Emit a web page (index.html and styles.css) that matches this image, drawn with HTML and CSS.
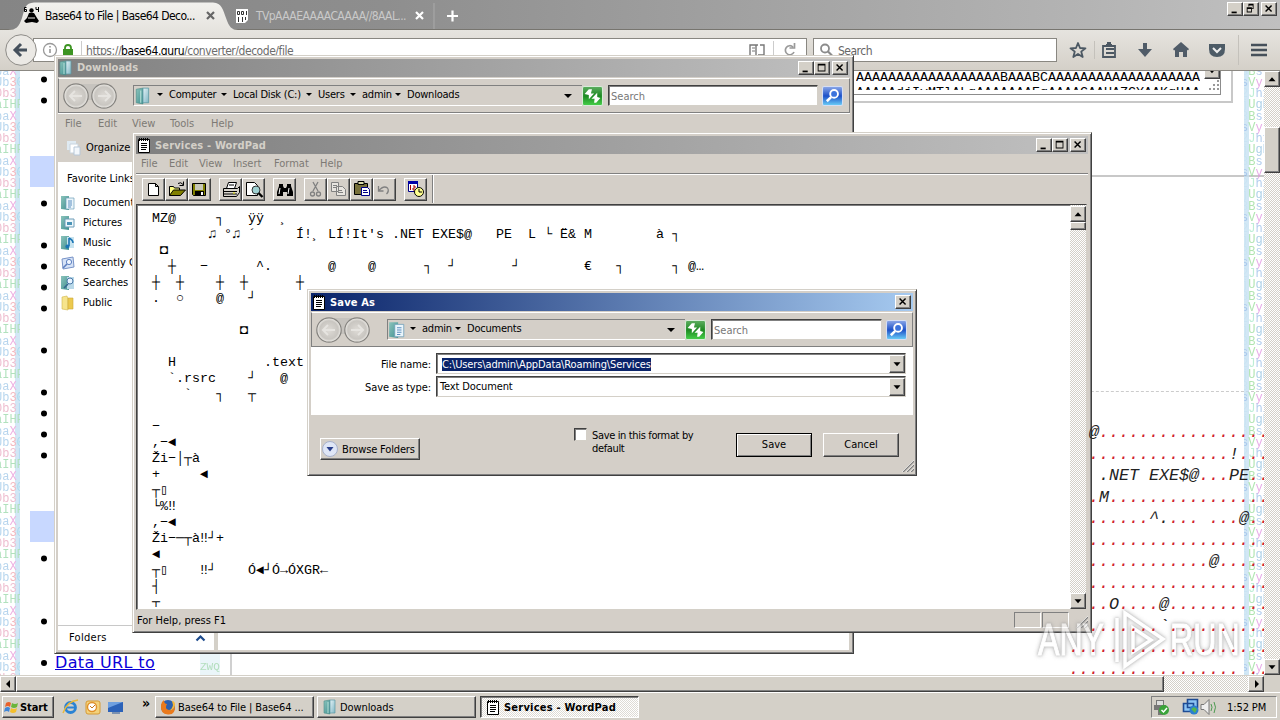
FILE: index.html
```html
<!DOCTYPE html>
<html lang="en">
<head>
<meta charset="utf-8">
<title>Desktop</title>
<link rel="stylesheet" href="styles.css">
</head>
<body>
<svg class="defs" width="0" height="0">
  <defs>
    <linearGradient id="gTeal" x1="0" y1="0" x2="1" y2="1"><stop offset="0" stop-color="#8cc4bc"/><stop offset="1" stop-color="#3f8f90"/></linearGradient>
    <linearGradient id="gPage" x1="0" y1="0" x2="1" y2="1"><stop offset="0" stop-color="#e4f2f6"/><stop offset="1" stop-color="#7fb6c4"/></linearGradient>
    <linearGradient id="gGreen" x1="0" y1="0" x2="0" y2="1"><stop offset="0" stop-color="#5fae62"/><stop offset=".5" stop-color="#1d8a22"/><stop offset="1" stop-color="#46d04a"/></linearGradient>
    <linearGradient id="gBlue" x1="0" y1="0" x2="0" y2="1"><stop offset="0" stop-color="#8ca8e8"/><stop offset=".5" stop-color="#1c50c8"/><stop offset="1" stop-color="#6cd0f8"/></linearGradient>
    <radialGradient id="gBall"><stop offset="0" stop-color="#dedbd6"/><stop offset=".75" stop-color="#c9c6c1"/><stop offset="1" stop-color="#f0eeea"/></radialGradient>
    <linearGradient id="gTab" x1="0" y1="0" x2="0" y2="1"><stop offset="0" stop-color="#f2f1ee"/><stop offset="1" stop-color="#e6e4df"/></linearGradient>
  </defs>
  <symbol id="folder" viewBox="0 0 16 16"><path d="M2 2l6-1v14l-6-1z" fill="url(#gTeal)" stroke="#4d8f8c" stroke-width=".6"/><path d="M8 1h5v13H8z" fill="url(#gPage)" stroke="#5b9aa4" stroke-width=".7"/><path d="M6 3v11" stroke="#b7e0d8"/></symbol>
  <symbol id="docs" viewBox="0 0 16 16"><path d="M1 1h8v14l-8-1z" fill="url(#gTeal)"/><path d="M6 3h8v11H6z" fill="#eaf5fb" stroke="#6e9db8" stroke-width=".7"/><path d="M8 6h4M8 8h4M8 10h4M8 12h3" stroke="#5c8ec0"/></symbol>
  <symbol id="pics" viewBox="0 0 16 16"><path d="M1 1h8v14l-8-1z" fill="url(#gTeal)"/><path d="M5 4h9v8H5z" fill="#eef7fb" stroke="#6e9db8"/><path d="M7 7h5v3H7z" fill="#4a93b6"/></symbol>
  <symbol id="music" viewBox="0 0 16 16"><path d="M1 1h8v14l-8-1z" fill="url(#gTeal)"/><path d="M7 2h7v11H7z" fill="#c7e3ef"/><path d="M9 3v8M9 3q4 2 4 5" stroke="#1b75b5" stroke-width="1.6" fill="none"/><circle cx="7.4" cy="11.5" r="2" fill="#1b75b5"/></symbol>
  <symbol id="recent" viewBox="0 0 16 16"><path d="M2 4l11-2 1 10-11 2z" fill="#d5e2f6" stroke="#7893c7"/><circle cx="9" cy="7" r="2.6" fill="#eef5ff" stroke="#5d7fc0"/><path d="M7 9l-4 4" stroke="#5d7fc0" stroke-width="1.6"/></symbol>
  <symbol id="find" viewBox="0 0 16 16"><path d="M1 1h8v14l-8-1z" fill="url(#gTeal)"/><path d="M7 2h7v12H7z" fill="#b9d8e8"/><circle cx="10" cy="6" r="3" fill="#e6f3ff" stroke="#4c79a8"/><path d="M8 9l-4 4" stroke="#34658f" stroke-width="1.6"/></symbol>
  <symbol id="public" viewBox="0 0 16 16"><path d="M2 2l5-1 1 3v11l-6-1z" fill="#f6e48c" stroke="#d2b64a" stroke-width=".6"/><path d="M8 3h5v11H8z" fill="#ecc94e" stroke="#cfa83a" stroke-width=".6"/></symbol>
  <symbol id="pad" viewBox="0 0 16 16"><path d="M2.500 2.500h11v13h-11z" fill="#fff" stroke="#000"/><path d="M3.500 1v3M5.500 1v3M7.500 1v3M9.500 1v3M11.500 1v3" stroke="#000"/><path d="M5 6.500h6M5 8.500h6M5 10.500h6M5 12.500h5" stroke="#000"/></symbol>
  <symbol id="go" viewBox="0 0 20 19"><rect x=".5" y=".5" width="19" height="18" rx="1.5" fill="url(#gGreen)" stroke="#d8ecd8"/><path d="M2.500 7.500l4-4.500h3l-1 4h3l-5 5.500v-4zM17.500 11.500l-4 4.500h-2l.5-4h-3l5.500-5.500v4z" fill="#fff"/></symbol>
  <symbol id="seek" viewBox="0 0 20 19"><rect x=".5" y=".5" width="19" height="18" rx="1.500" fill="url(#gBlue)" stroke="#d5def3"/><circle cx="11.500" cy="7.500" r="3.700" fill="#3b73dc" stroke="#fff" stroke-width="1.800"/><path d="M8.600 10.500l-4 4" stroke="#fff" stroke-width="2.400"/></symbol>
  <symbol id="balls" viewBox="0 0 56 28"><rect x="14" y="2" width="28" height="16" fill="#c6c3be"/><circle cx="14" cy="14" r="12.200" fill="url(#gBall)" stroke="#85837f" stroke-width="1.200"/><circle cx="42" cy="14" r="12.200" fill="url(#gBall)" stroke="#85837f" stroke-width="1.200"/><path d="M8 14h12M13 9l-5 5 5 5M36 14h12M43 9l5 5-5 5" stroke="#e6e4e0" stroke-width="2" fill="none"/></symbol>
  <symbol id="grip" viewBox="0 0 12 12"><path d="M1 12L12 1M5 12l7-7M9 12l3-3" stroke="#808080" stroke-width="1.400"/><path d="M0 12L12 0M4 12l8-8M8 12l4-4" stroke="#fff" stroke-width=".6"/></symbol>
  <symbol id="wmin" viewBox="0 0 16 14"><path d="M4 10h6v2H4z"/></symbol>
  <symbol id="wmax" viewBox="0 0 16 14"><path d="M3 2h9v9H3zM4 4v6h7V4z" fill-rule="evenodd"/></symbol>
  <symbol id="wres" viewBox="0 0 16 14"><path d="M5 1h6v6H9V6h1V3H6v1H5zM3 5h6v6H3zM4 7v3h4V7z" fill-rule="evenodd"/></symbol>
  <symbol id="wcls" viewBox="0 0 16 14"><path d="M4 3l7 7M11 3l-7 7" stroke="#000" stroke-width="1.700"/></symbol>
  <symbol id="dn" viewBox="0 0 16 16"><path d="M4 6h8l-4 4.500z"/></symbol>
  <symbol id="up" viewBox="0 0 16 16"><path d="M4 10.500h8L8 6z"/></symbol>
</svg>

<div class="desktop">
  <div class="browser">
    <div class="tabs">
      <svg class="tabshape" width="230" height="30"><path d="M0 30C8 30 11 27 14 18C17 8 17 3 26 2.500H205C214 3 215 10 218 18C221 27 224 30 230 30z" fill="url(#gTab)"/></svg>
      <div class="tab t1">
        <svg width="18" height="17" viewBox="0 0 18 17"><circle cx="8.500" cy="3.500" r="2.200"/><path d="M6 6h5l3 5 2 3-2 2-5-1-6 1-2-2 3-3z"/><path d="M3.500 .5h-2v4h2v-2h-2M13 0v2.500h3M15.500 0v5" stroke="#000" fill="none"/><path d="M5 11h7" stroke="#e8e6e1"/></svg>
        <span class="cap">Base64 to File | Base64 Deco...</span>
        <svg class="x" width="9" height="9"><path d="M1 1l7 7M8 1L1 8" stroke="#666" stroke-width="2.200"/></svg>
      </div>
      <div class="tab t2">
        <svg width="14" height="16" viewBox="0 0 14 16"><path d="M1 1h12v11l-3 3H1z" fill="#fff"/><path d="M2.500 3.500h2v3h-2zM6.500 3.500h2v3h-2zM11.500 3v4M3.500 9v5M7.500 9v5M10.500 9v3" fill="none" stroke="#333"/></svg>
        <span class="cap">TVpAAAEAAAACAAAA//8AAL...</span>
        <svg class="x" width="9" height="9"><path d="M1 1l7 7M8 1L1 8" stroke="#fff" stroke-width="2.200"/></svg>
      </div>
      <svg class="plus" width="26" height="26"><path d="M1 0v26" stroke="#aaa"/><path d="M14 13h11M19.500 7.500v11" stroke="#fff" stroke-width="2.200"/></svg>
      <div class="wbtns"><svg class="wb"><use href="#wmin"/></svg><svg class="wb"><use href="#wres"/></svg><svg class="wb last"><use href="#wcls"/></svg></div>
    </div>
    <div class="nav">
      <svg class="back" width="34" height="34"><circle cx="17" cy="17" r="15.300" fill="#ebe9e5" stroke="#8e8c88"/><path d="M11 17h12M17 11l-6 6 6 6" stroke="#45505c" stroke-width="3" fill="none"/></svg>
      <div class="url">
        <svg width="46" height="22"><circle cx="10" cy="11" r="6.500" fill="#fff" stroke="#999" stroke-width="1.300"/><path d="M10 10v4M10 7v1.500" stroke="#888" stroke-width="1.400"/><path d="M23 10h10v7H23z" fill="#3d9423"/><path d="M25 11V9q0-3 3-3t3 3v2" fill="none" stroke="#3d9423" stroke-width="1.800"/><path d="M41.500 2v18" stroke="#ccc"/></svg>
        <span class="addr">https://<b>base64.guru</b>/converter/decode/file</span>
        <svg width="58" height="22"><path d="M2 6h6v11H2zM8 6h2M12 6h4v10h-6" fill="none" stroke="#777" stroke-width="1.400"/><path d="M4 9h3M4 12h3" stroke="#777"/><path d="M25.500 2v18" stroke="#ccc"/><path d="M46 13a4.500 4.500 0 1 1-1-5M46.500 4v5h-5" fill="none" stroke="#999" stroke-width="1.700"/></svg>
      </div>
      <div class="sfield"><svg width="22" height="22"><circle cx="11" cy="9.500" r="4" fill="none" stroke="#8b8b8b" stroke-width="1.800"/><path d="M14 12.500l4 4" stroke="#8b8b8b" stroke-width="2.200"/></svg><span>Search</span></div>
      <svg class="tools" width="212" height="30" viewBox="0 0 212 30">
        <g fill="none" stroke="#4c5863" stroke-width="1.800"><path d="M10 8l2 5 5.500.3-4.300 3.300 1.500 5.400L10 19l-4.700 3 1.500-5.400L2.500 13.300 8 13z" stroke-linejoin="round"/><path d="M35 11h12v11H35zM38 10h6M39 8h4M38 14h8M38 18h8"/></g>
        <path d="M26.500 6v18M170.500 0v30" stroke="#c4c1bb"/>
        <path d="M75 8h4v6h5l-7 8-7-8h5zM105 14l8-7 8 7-1 1.500-1-.7V22h-4v-5h-4v5h-4v-7l-1 .5z" fill="#505c68"/>
        <path d="M141 9h16v5q0 8-8 8t-8-8z" fill="#4d5b66"/><path d="M145 13l4 4 4-4" fill="none" stroke="#eee" stroke-width="2"/>
        <path d="M183 10h16M183 15h16M183 20h16" stroke="#46505a" stroke-width="2.600"/>
      </svg>
    </div>
    <div class="view">
      <div class="page">
        <svg class="strip" width="20" height="606">
          <defs><pattern id="pl" width="20" height="45" patternUnits="userSpaceOnUse"><rect x="15" width="5" height="45" fill="#c4e0f2"/><g class="mx"><text x="-5" y="15"><tspan fill="#9fc8e8">Ub</tspan><tspan fill="#f0a0a8">3</tspan><tspan fill="#8fd0e8">0</tspan></text><text x="-5" y="26"><tspan fill="#e8a8c0">0b3</tspan><tspan fill="#9fd0ee">[</tspan></text><text x="-5" y="37" fill="#98d8a8">aIHF</text><text x="-5" y="4"><tspan fill="#a0c8e8">ba</tspan><tspan fill="#e898d8">X</tspan></text><text x="-5" y="49"><tspan fill="#a0c8e8">ba</tspan><tspan fill="#e898d8">X</tspan></text></g></pattern></defs>
          <rect width="20" height="606" fill="url(#pl)"/>
        </svg>
        <div class="side">
          <svg class="dots" width="180" height="581"><path d="M10 85h30v31H10zM10 440h30v31H10z" fill="#c8d8ff"/><path d="M24 8.500h0M24 29.500h0M24 132.500h0M24 174.500h0M24 195.500h0M24 216.500h0M24 237.500h0M24 279.500h0M24 321.500h0M24 342.500h0M24 363.500h0M24 384.500h0M24 487.500h0M24 550.500h0" stroke="#000" stroke-width="6" stroke-linecap="round"/></svg>
          <div class="li"><i></i><a>Data URL to</a></div>
        </div>
        <svg class="strip mid" width="20" height="606"><rect width="20" height="606" fill="#e4f2f8"/><g class="mx"><text x="0" y="599" font-size="11" fill="#9ad4a8">ZWQ</text></g></svg>
        <div class="main">
          <div class="fset"><div class="tarea"><pre>AAAAAAAAAAAAAAAAAABAAABCAAAAAAAAAAAAAAAAAAA
AAAAAdjIyMTlALgAAAAAAAEgAAAACAAUAZCYAAKgHAA</pre><div class="tside"><svg class="sb"><use href="#dn"/></svg><svg width="12" height="12"><path d="M10 2h0M6 6h0M10 6h0M2 10h0M6 10h0M10 10h0" stroke="#999" stroke-width="2" stroke-linecap="square"/></svg></div></div></div>
          <div class="rule"></div>
          <div class="out"><pre><b>@</b>.................
  ..............<b>!</b>...
   <b>.NET EXE$@</b>...<b>PE</b>..
  .<b>M</b>................
  ......<b>^.</b>... ...<b>@</b>..
  ..................
  ............<b>@</b>.....
  ..................
  ..<b>O</b>....<b>@</b>..........
  .......<b>`</b>..........
....................
................. ..</pre></div>
        </div>
        <svg class="strip right" width="20" height="606">
          <defs><pattern id="pr" width="20" height="45" patternUnits="userSpaceOnUse"><rect width="5" height="45" fill="#c4e0f2"/><g class="mx"><text x="-3" y="15"><tspan fill="#8fb8e8">s</tspan><tspan fill="#98dc98">V</tspan><tspan fill="#e090e0">y</tspan></text><text x="-3" y="26"><tspan fill="#b8dcf0">2</tspan><tspan fill="#a8e8c8">J</tspan><tspan fill="#98bce8">h</tspan><tspan fill="#98bce8">1</tspan></text><text x="-3" y="37"><tspan fill="#b8dcf0">j</tspan><tspan fill="#98dc98">U</tspan><tspan fill="#90c0e0">gb</tspan></text><text x="-3" y="4"><tspan fill="#b8dcf0">3</tspan><tspan fill="#98dc98">B</tspan><tspan fill="#98bce8">s</tspan></text><text x="-3" y="49"><tspan fill="#b8dcf0">3</tspan><tspan fill="#98dc98">B</tspan><tspan fill="#98bce8">s</tspan></text></g></pattern></defs>
          <rect width="20" height="606" fill="url(#pr)"/>
        </svg>
      </div>
      <div class="vs"><svg class="sb"><use href="#up"/></svg><div class="thumb"></div><svg class="sb end"><use href="#dn"/></svg></div>
    </div>
    <div class="hs"><svg class="sb"><path d="M9 3v8L5 7z"/></svg><div class="thumb"></div><svg class="sb end"><path d="M6 3v8l4-4z"/></svg><div class="corner"></div></div>
  </div>

  <div class="taskbar">
    <div class="btn start"><svg width="16" height="16"><path d="M2 4q3-2 5 0L6 8Q4 6 1 8z" fill="#e8622c"/><path d="M8 4q3 2 6 0l-1 4q-3 2-6 0z" fill="#69b53b"/><path d="M1 9q3-2 5 0l-1 4q-2-2-5 0z" fill="#3f86d8"/><path d="M7 9q3 2 6 0l-1 4q-3 2-6 0z" fill="#f4bf2c"/></svg><b>Start</b></div>
    <svg class="quick" width="66" height="18"><circle cx="8.500" cy="9.500" r="5" fill="none" stroke="#2b83d4" stroke-width="2.800"/><path d="M4 9.500h9" stroke="#2b83d4" stroke-width="2"/><path d="M1 15Q5 3 16 2" fill="none" stroke="#e9b83a" stroke-width="1.400"/><rect x="24" y="3" width="14" height="13" rx="2" fill="#f3d27c" stroke="#d79a35"/><circle cx="30" cy="9" r="4.500" fill="#fff" stroke="#e0902c" stroke-width="1.400"/><path d="M28 8l2 2 3-3" stroke="#c87818" fill="none"/><path d="M46 4h15v10H46z" fill="#2c62b8"/><path d="M46 4h15l-15 6z" fill="#6fa0e0"/><path d="M50 15h8" stroke="#7b91b0" stroke-width="2"/></svg>
    <span class="more">»</span>
    <div class="btn task"><svg width="16" height="16"><circle cx="8" cy="8" r="7" fill="#2b60b0"/><path d="M1 6Q0 15 8 15.500T15 6Q14 12 9 11T7 5Q4 5 4 1 1 3 1 6z" fill="#ea7a1c"/><path d="M15 6Q15 2 12 2l1 4q-1 5-4 5 5 1 6-5z" fill="#f7b93a"/></svg><span class="s1">Base64 to File | Base64 ...</span></div>
    <div class="btn task"><svg width="16" height="16"><use href="#folder"/></svg><span class="s2">Downloads</span></div>
    <div class="btn task on"><svg width="16" height="16"><use href="#pad"/></svg><b class="s3">Services - WordPad</b></div>
    <div class="tray"><svg width="68" height="20"><path d="M4 3h8v5h2v5h-3v5H6v-5H2V8h2z" fill="#777"/><path d="M5 4h6v4H5z" fill="#ddd"/><circle cx="12" cy="13" r="5" fill="#3aa33a"/><path d="M9.500 13l2 2 3.500-4" stroke="#fff" stroke-width="1.500" fill="none"/><path d="M35.500 2.500h10v8h-10zM31.500 6.500h10v8h-10z" fill="#8cc4f4" stroke="#1f4c94" stroke-width="1.600"/><circle cx="42" cy="13" r="4.500" fill="#2b7fd0"/><path d="M39 12l3-2 3 2-2 4z" fill="#55b550"/><path d="M49 7.500h3l5-5v15l-5-5h-3z" fill="#eee" stroke="#777"/><path d="M59 7q2 3 0 7M62 5q3 5 0 11" fill="none" stroke="#4c9a50"/></svg><span>1:52 PM</span></div>
  </div>

  <div class="win explorer">
    <div class="title"><svg width="16" height="16"><use href="#folder"/></svg><b class="n1">Downloads</b><div class="wbtns"><svg class="wb"><use href="#wmin"/></svg><svg class="wb"><use href="#wmax"/></svg><svg class="wb last"><use href="#wcls"/></svg></div></div>
    <div class="band">
      <svg width="56" height="28"><use href="#balls"/></svg>
      <div class="crumbs"><svg width="18" height="18"><use href="#folder"/></svg><div class="path p1"><span>Computer</span><span>Local Disk (C:)</span><span>Users</span><span>admin</span><span>Downloads</span></div><svg class="drop" width="10" height="6"><path d="M1 1h8L5 5z"/></svg></div>
      <svg class="go" width="21" height="20"><use href="#go"/></svg>
      <div class="field"><span>Search</span></div>
      <svg class="go" width="21" height="20"><use href="#seek"/></svg>
    </div>
    <div class="menu m1"><span>File</span><span>Edit</span><span>View</span><span>Tools</span><span>Help</span></div>
    <div class="org"><svg width="16" height="16"><path d="M1 1h9v9H1z" fill="#dfeaf2"/><path d="M4 4h8v9H4z" fill="#fff" stroke="#c8d4de"/><path d="M8 7h6v8H8z" fill="#f3f7fb" stroke="#b8c8d8"/></svg><span>Organize</span></div>
    <div class="body">
      <div class="links">
        <div class="fav">Favorite Links</div>
        <div class="lk"><svg width="16" height="16"><use href="#docs"/></svg><span>Documents</span></div>
        <div class="lk"><svg width="16" height="16"><use href="#pics"/></svg><span>Pictures</span></div>
        <div class="lk"><svg width="16" height="16"><use href="#music"/></svg><span>Music</span></div>
        <div class="lk"><svg width="16" height="16"><use href="#recent"/></svg><span>Recently Changed</span></div>
        <div class="lk"><svg width="16" height="16"><use href="#find"/></svg><span>Searches</span></div>
        <div class="lk"><svg width="16" height="16"><use href="#public"/></svg><span>Public</span></div>
        <div class="fold"><span>Folders</span><svg width="11" height="8"><path d="M1.500 6.500l4-4 4 4" fill="none" stroke="#1c4a8c" stroke-width="2.200"/></svg></div>
      </div>
    </div>
  </div>

  <div class="win wordpad">
    <div class="title"><svg width="16" height="16"><use href="#pad"/></svg><b class="n2">Services - WordPad</b><div class="wbtns"><svg class="wb"><use href="#wmin"/></svg><svg class="wb"><use href="#wmax"/></svg><svg class="wb last"><use href="#wcls"/></svg></div></div>
    <div class="menu m2"><span>File</span><span>Edit</span><span>View</span><span>Insert</span><span>Format</span><span>Help</span></div>
    <div class="tbar">
      <svg class="tb"><path d="M5.500 4.500h7l3 3v9h-10zM12.500 4.500v3h3" fill="#fff" stroke="#000"/></svg>
      <svg class="tb"><path d="M3.500 16.500v-9h4l1 1.500h5v3" fill="#ffff80" stroke="#000"/><path d="M3.500 16.500l4-5.500h12l-5 5.500z" fill="#808000" stroke="#000"/><path d="M12 4.500q3-2 5 1M17.500 2.500v4h-4" fill="none" stroke="#000"/></svg>
      <svg class="tb"><path d="M3.500 4.500h13v12h-12l-1-1z" fill="#808000" stroke="#000"/><path d="M6 5h8v6H6z" fill="#c8c8b8"/><path d="M6 12h9v4H6z" fill="#000"/><path d="M12 13h2v3h-2z" fill="#fff"/></svg>
      <svg class="tb g8"><path d="M8.500 3.500h8l-2 6h-8z" fill="#fff" stroke="#000"/><path d="M3.500 9.500h14l2-2v6l-3 4h-13z" fill="#d8d4cc" stroke="#000"/><path d="M4 12.500h13M4 15h13M9 6h5" stroke="#000"/><path d="M13 14h2" stroke="#ee0"/></svg>
      <svg class="tb"><path d="M3.500 3.500h8l3 3v10h-11z" fill="#fff" stroke="#000"/><circle cx="13" cy="11" r="4" fill="#9fd0d0" stroke="#333"/><path d="M15.500 14l4 4" stroke="#000" stroke-width="2.400"/></svg>
      <svg class="tb g8"><path d="M5 5h4v2l1 2h2l1-2V5h4v2l2 6v4h-6v-4h-4v4H3v-4l2-6z"/><path d="M6 9l-1 6M15 9l-1 6" stroke="#fff"/></svg>
      <svg class="tb g8"><g stroke="#808080" fill="none" stroke-width="1.300"><path d="M8 3l5 9M13 3l-5 9"/><circle cx="7.500" cy="15" r="2"/><circle cx="13.500" cy="15" r="2"/></g></svg>
      <svg class="tb"><path d="M3.500 3.500h7v9h-7zM8.500 7.500h6l3 3v6h-9z" fill="#e8e5e0" stroke="#808080"/><path d="M5 6.500h4M5 8.500h3M10 11.500h4M10 13.500h5" stroke="#808080"/></svg>
      <svg class="tb"><path d="M3.500 4.500h13v11h-13z" fill="#77703a" stroke="#000"/><path d="M7 2.500h6v3H7z" fill="#dda" stroke="#000"/><path d="M10.500 8.500h6l2 2v6h-8z" fill="#fff" stroke="#008"/><path d="M12 11.500h4M12 13.500h5" stroke="#008"/></svg>
      <svg class="tb"><path d="M4.500 7v5h5M4.500 12q5-6 9-3 2 3-1 6" fill="none" stroke="#808080" stroke-width="1.300"/></svg>
      <svg class="tb g8"><path d="M3.500 2.500h9v10h-9z" fill="#fff" stroke="#008"/><path d="M3 2h10v3H3z" fill="#0000a8"/><path d="M5.500 6v5M8 7h2v2H8v2h2" stroke="#a00" fill="none"/><circle cx="14" cy="13" r="4.500" fill="#ffff90" stroke="#000"/><path d="M14 10v3h3" stroke="#000" fill="none"/></svg>
      <i class="tend"></i>
    </div>
    <div class="edit">
<pre>MZ@     ┐   ÿÿ  ¸
       ♫ °♫ ´     Í!¸ LÍ!It's .NET EXE$@   PE  L └ Ë& M        à ┐
 ◘
  ┼   −      ^.       @    @      ┐  ┘       ┘        €   ┐      ┐ @…
┼  ┼    ┼  ┼      ┼
.  ○    @   ┘

           ◘

  H           .text
  `.rsrc    ┘   @
    `   ┐   ┬

−
,−◄
Ži−│┬à
+     ◄
┬▯
└%‼
,−◄
Ži−─┬à‼┘+
◄
┬▯    ‼┘    Ó◄┘Ó→ÓXGR←
┤
┬</pre>
      <div class="vs"><svg class="sb"><use href="#up"/></svg><div class="thumb"></div><svg class="sb end"><use href="#dn"/></svg></div>
    </div>
    <div class="status"><span>For Help, press F1</span><i></i><i></i><svg width="12" height="12"><use href="#grip"/></svg></div>
  </div>

  <div class="win dialog">
    <div class="title active"><svg width="16" height="16"><use href="#pad"/></svg><b class="n3">Save As</b><div class="wbtns"><svg class="wb last"><use href="#wcls"/></svg></div></div>
    <div class="band">
      <svg width="56" height="28"><use href="#balls"/></svg>
      <div class="crumbs"><svg width="18" height="18"><use href="#docs"/></svg><div class="path p2"><span>admin</span><span>Documents</span></div><svg class="drop" width="10" height="6"><path d="M1 1h8L5 5z"/></svg></div>
      <svg class="go" width="21" height="20"><use href="#go"/></svg>
      <div class="field"><span>Search</span></div>
      <svg class="go" width="21" height="20"><use href="#seek"/></svg>
    </div>
    <div class="form">
      <label class="l1">File name:</label><div class="combo"><em>C:\Users\admin\AppData\Roaming\Services</em><svg class="sb"><use href="#dn"/></svg></div>
      <label class="l2">Save as type:</label><div class="combo"><span>Text Document</span><svg class="sb"><use href="#dn"/></svg></div>
    </div>
    <div class="foot">
      <div class="pb browse"><svg width="18" height="18"><circle cx="9" cy="9" r="7.500" fill="#dfe6f6" stroke="#a8b2cc"/><path d="M5.500 7h7L9 11.500z" fill="#2a3f8c"/></svg><span>Browse Folders</span></div>
      <i class="chk"></i>
      <div class="chkl"><span>Save in this format by</span><br><span>default</span></div>
      <div class="pb save"><span>Save</span></div>
      <div class="pb cancel"><span>Cancel</span></div>
      <svg class="dgrip" width="12" height="12"><use href="#grip"/></svg>
    </div>
  </div>

  <div class="mark"><span>ANY</span><svg width="58" height="64"><path d="M8 10v44M16 5l38 26-38 27zM24 20v24l18-12z" fill="none" stroke="#fff" stroke-width="3.500"/></svg><span>RUN</span></div>
</div>
</body>
</html>
```
FILE: styles.css
```css
* { box-sizing: border-box; }
body { margin: 0; font: 11px/14px "DejaVu Sans Condensed", "DejaVu Sans", sans-serif; font-stretch: condensed; color: #000; overflow: hidden; }
svg { display: block; flex: none; }
pre { margin: 0; font-family: "Liberation Mono", "DejaVu Sans Mono", monospace; }
i, em { font-style: normal; }
span, label, b, em { white-space: nowrap; }
.defs { position: absolute; }
.desktop { position: relative; width: 1280px; height: 720px; overflow: hidden; background: #d4cfc8; display: flex; flex-direction: column; }

/* shared pieces */
.wbtns { display: flex; margin-left: auto; }
.wb { width: 16px; height: 14px; background: #d4d0c8; border: 1px solid; border-color: #fff #404040 #404040 #fff; box-shadow: inset -1px -1px #808080; }
.wb.last { margin-left: 2px; }
.sb { width: 16px; height: 16px; background: #d4d0c8; border: 1px solid; border-color: #fff #404040 #404040 #fff; box-shadow: inset -1px -1px #808080; }
.vs, .hs { background: repeating-conic-gradient(#fff 0 25%, #d4d0c8 0 50%) 0 0 / 2px 2px; }
.vs { width: 16px; display: flex; flex-direction: column; flex: none; }
.end { margin-top: auto; }
.thumb { background: #d4d0c8; border: 1px solid; border-color: #fff #404040 #404040 #fff; box-shadow: inset -1px -1px #808080; }

/* browser */
.browser { display: flex; flex-direction: column; height: 692px; flex: none; }
.tabs { height: 30px; flex: none; display: flex; position: relative; background: linear-gradient(90deg, #858585, #8e8e8e 30%, #b4b4b4 85%, #c0c0c0); border-bottom: 1px solid #77756f; }
.tabshape { position: absolute; left: 8px; top: 0; }
.tab { display: flex; align-items: center; position: relative; height: 31px; font-size: 12px; }
.t1 { margin-left: 23px; width: 211px; }
.t1 .cap { margin-left: 4px; width: 161px; letter-spacing: -.56px; }
.t2 { color: #c9c9c9; width: 199px; }
.t2 svg:first-child { margin-left: 1px; }
.t2 .cap { margin-left: 7px; width: 159px; letter-spacing: -.58px; }
.plus { margin: 3px 0 0 0; }
.tabs .wbtns { margin: 2px 3px 0 auto; }
.nav { height: 41px; flex: none; display: flex; background: linear-gradient(#e6e4df, #d4d0c8); border-bottom: 1px solid #8b8882; }
.back { margin: 3px 0 0 4px; position: relative; z-index: 1; }
.url { margin: 8px 0 0 -5px; width: 774px; height: 24px; background: #fff; border: 1px solid #898781; display: flex; padding-left: 6px; }
.addr { color: #6c6c6c; font-size: 12px; line-height: 24px; width: 674px; letter-spacing: -.45px; }
.addr b { color: #000; font-weight: normal; }
.sfield { margin: 8px 0 0 6px; width: 244px; height: 24px; background: #fff; border: 1px solid #898781; display: flex; color: #666; font-size: 12px; line-height: 24px; }
.sfield span { margin-left: 2px; letter-spacing: -.5px; }
.tools { margin: 5px 0 0 11px; }
.view { display: flex; height: 604px; flex: none; }
.page { width: 1264px; height: 604px; background: #fff; display: flex; overflow: hidden; }
.mx { font: 12px "Liberation Mono", monospace; }
.strip { opacity: .75; }
.side { width: 180px; }
.li { display: flex; align-items: center; height: 22px; }
.li i { width: 6px; height: 6px; border-radius: 3px; background: #000; margin: 0 8px 0 21px; }
.li a { color: #0a00d8; text-decoration: underline; font: 16px/22px "DejaVu Sans", sans-serif; letter-spacing: .35px; white-space: nowrap; }
.main { width: 1024px; padding-left: 10px; }
.fset { width: 1003px; height: 32px; border: 2px solid #c8c8c8; border-top: 0; border-left: 0; }
.tarea { width: 991px; height: 24px; border: 1px solid #8c8c8c; border-top: 0; display: flex; overflow: hidden; justify-content: flex-end; }
.tarea pre { font-size: 13.33px; line-height: 15px; height: 20px; overflow: hidden; margin-top: -1px; padding: 0; margin-right: 3px; }
.tside { width: 17px; display: flex; flex-direction: column; align-items: flex-end; }
.tside .sb { margin-top: -8px; height: 16px; }
.rule { margin-top: 72px; height: 2px; background: #c8c8c8; width: 1034px; }
.out { margin-top: 214px; border-top: 1px dashed #ccc; border-left: 2px solid #d0d0d0; height: 285px; padding: 30px 0 0 837px; width: 1034px; }
.out pre { font-size: 16.67px; line-height: 21.5px; font-style: italic; color: #d02030; position: relative; z-index: 1; text-indent: 20px; }
.out pre b { font-weight: normal; color: #222; }
.hs { height: 17px; flex: none; display: flex; border-top: 1px solid #d4d0c8; }
.hs .thumb { width: 1148px; }
.hs .end { margin: 0 0 0 auto; }
.corner { width: 16px; background: #d4d0c8; }

/* taskbar */
.taskbar { height: 28px; flex: none; border-top: 1px solid #fff; background: #d4d0c8; display: flex; padding: 3px 3px 0 2px; }
.btn { height: 22px; display: flex; align-items: center; border: 1px solid; border-color: #fff #404040 #404040 #fff; box-shadow: inset -1px -1px #808080; }
.start { width: 52px; padding-left: 1px; }
.start b { font-size: 11px; letter-spacing: -.1px; padding-top: 1px; }
.quick { margin: 2px 0 0 8px; }
.more { margin: 0 5px 0 14px; font-size: 14px; line-height: 14px; font-weight: bold; width: 8px; }
.task { width: 159px; padding-left: 4px; margin-right: 3px; }
.task span, .task b { margin-left: 2px; padding-top: 1px; letter-spacing: -.1px; }
.task b { margin-left: 3px; letter-spacing: .22px; padding-top: 2px; }
.task.on { margin-left: 1px; border-color: #404040 #fff #fff #404040; box-shadow: inset 1px 1px #808080; background: repeating-conic-gradient(#fff 0 25%, #dedbd5 0 50%) 0 0 / 2px 2px; }
.tray { margin-left: auto; width: 126px; border: 1px solid; border-color: #808080 #fff #fff #808080; display: flex; align-items: center; height: 22px; }
.tray span { margin-left: 7px; padding-top: 1px; letter-spacing: -.1px; }

/* windows */
.win { position: absolute; background: #d4cfc8; border: 1px solid; border-color: #d4d0c8 #404040 #404040 #d4d0c8; box-shadow: inset 1px 1px #fff, inset -1px -1px #808080; padding: 3px; display: flex; flex-direction: column; }
.explorer { left: 54px; top: 55px; width: 800px; height: 599px; }
.wordpad { left: 132px; top: 132px; width: 960px; height: 501px; }
.dialog { left: 307px; top: 289px; width: 610px; height: 187px; }
.title { height: 18px; flex: none; display: flex; align-items: center; background: linear-gradient(90deg, #808080, #c0c0c0); color: #d4d0c8; padding-right: 2px; }
.title b { margin-left: 3px; }
.title .n2, .title .n3 { letter-spacing: .17px; padding-top: 1px; }
.title.active { background: linear-gradient(90deg, #0a246a, #a6caf0); color: #fff; }
.band { height: 35px; flex: none; margin-top: 1px; border: 1px solid; border-color: #fff #808080 #808080 #808080; display: flex; align-items: center; padding-left: 3px; box-shadow: 0 1px #fff; }
.crumbs { height: 21px; border: 1px solid #808080; border-right: 0; border-bottom-color: #fff; display: flex; align-items: center; margin-left: 15px; flex: none; }
.path { display: grid; margin-left: 5px; letter-spacing: -.22px; padding-bottom: 2px; }
.path span::before { content: ""; display: inline-block; border: 3px solid transparent; border-top-color: #000; border-bottom: 0; margin: 0 6px 2px 0; }
.drop { margin-left: auto; margin-right: 9px; }
.field { height: 21px; background: #fff; border: 1px solid; border-color: #404040 #d4d0c8 #d4d0c8 #404040; box-shadow: inset 1px 1px #808080; color: #777; padding: 4px 0 0 2px; }
.explorer .crumbs { width: 449px; }
.explorer .field { width: 210px; margin: 0 4px 0 5px; }
.p1 { grid-template-columns: 64px 85px 44px 45px 90px; }
.menu { display: grid; color: #7d7a75; flex: none; align-items: center; }
.m1 { height: 21px; grid-template-columns: 33px 34px 38px 41px 40px; padding-left: 7px; }
.m2 { height: 20px; grid-template-columns: 28px 30px 34px 41px 46px 30px; padding-left: 5px; border-bottom: 1px solid #808080; }
.org { height: 28px; display: flex; align-items: center; padding: 0 0 1px 8px; }
.org span { margin-left: 4px; }
.body { flex: 1; background: #fff; display: flex; border-right: 1px solid #d4d0c8; }
.links { width: 160px; border-right: 4px solid #d4d0c8; display: flex; flex-direction: column; padding-top: 10px; overflow: hidden; }
.fav { padding-left: 9px; height: 21px; }
.lk { display: flex; height: 20px; align-items: center; padding-left: 2px; }
.lk span { margin-left: 7px; }
.fold { margin-top: auto; border-top: 1px solid #c8c8c8; height: 25px; display: flex; align-items: center; justify-content: space-between; padding: 0 8px 0 11px; letter-spacing: .3px; }
.tbar { height: 30px; flex: none; display: flex; border-top: 1px solid #fff; padding: 3px 0 0 6px; }
.tb { width: 23px; height: 23px; border: 1px solid; border-color: #fff #404040 #404040 #fff; box-shadow: inset -1px -1px #808080; }
.g8 { margin-left: 8px; }
.tend { margin: -3px 0 0 5px; width: 2px; background: #808080; border-right: 1px solid #fff; height: 28px; }
.edit { flex: 1; min-height: 0; overflow: hidden; background: #fff; border: 1px solid; border-color: #404040 #d4d0c8 #d4d0c8 #404040; box-shadow: inset 1px 1px #808080; display: flex; justify-content: space-between; margin-right: 1px; }
.edit pre { font-size: 13.33px; line-height: 16px; padding: 6px 0 0 15px; height: 402px; overflow: hidden; }
.edit .vs { padding-top: 1px; }
.edit .thumb { height: 8px; }
.view .thumb { height: 46px; margin-top: 40px; }
.status { height: 19px; flex: none; display: flex; align-items: center; padding-left: 1px; }
.status span { margin-right: auto; padding-top: 3px; }
.status i { width: 27px; height: 16px; margin-right: 1px; border: 1px solid; border-color: #808080 #fff #fff #808080; }
.status svg { margin: 5px 0 0 6px; }

/* dialog */
.dialog .crumbs { width: 298px; margin-left: 16px; }
.dialog .path { margin-left: 4px; }
.dialog .field { width: 171px; margin: 0 4px 0 5px; }
.p2 { grid-template-columns: 45px 90px; }
.form { height: 67px; flex: none; margin-top: 1px; background: #fff; display: grid; grid-template-columns: 120px 470px; column-gap: 5px; grid-template-rows: 21px 21px; row-gap: 2px; padding-top: 5px; }
.form label { text-align: right; line-height: 24px; letter-spacing: -.1px; }
.combo { border: 1px solid; border-color: #404040 #d4d0c8 #d4d0c8 #404040; box-shadow: inset 1px 1px #808080; display: flex; justify-content: space-between; align-items: center; padding: 1px 0 0 3px; letter-spacing: -.13px; }
.combo .sb { height: 18px; }
.combo em { background: #0a246a; color: #fff; height: 13px; line-height: 13px; margin-left: 2px; }
.foot { flex: 1; display: flex; }
.pb { border: 1px solid; border-color: #fff #404040 #404040 #fff; box-shadow: inset -1px -1px #808080; display: flex; align-items: center; justify-content: center; height: 24px; flex: none; }
.browse { width: 100px; height: 22px; margin: 23px 0 0 9px; justify-content: flex-start; }
.browse span { margin-left: 3px; letter-spacing: -.15px; padding-top: 1px; }
.chk { width: 13px; height: 13px; margin: 13px 5px 0 154px; background: #fff; border: 1px solid; border-color: #404040 #d4d0c8 #d4d0c8 #404040; box-shadow: inset 1px 1px #808080; flex: none; }
.chkl { width: 144px; flex: none; line-height: 13px; margin-top: 14px; letter-spacing: -.35px; }
.save { width: 76px; margin-top: 18px; border-color: #000; box-shadow: inset 1px 1px #fff, inset -1px -1px #808080; }
.cancel { width: 76px; margin: 18px 0 0 11px; }
.dgrip { margin: auto 0 0 3px; }

/* watermark */
.mark { position: absolute; left: 1038px; top: 608px; display: flex; align-items: center; opacity: .6; color: #fff; font: 44px/64px "Liberation Sans", sans-serif; filter: drop-shadow(0 0 1px #999) drop-shadow(0 0 2px #999); -webkit-text-stroke: 1px #fff; }
.mark span { width: 68px; transform: scaleX(.73); transform-origin: 0 50%; }
.mark svg { margin: 0 3px; }
```
